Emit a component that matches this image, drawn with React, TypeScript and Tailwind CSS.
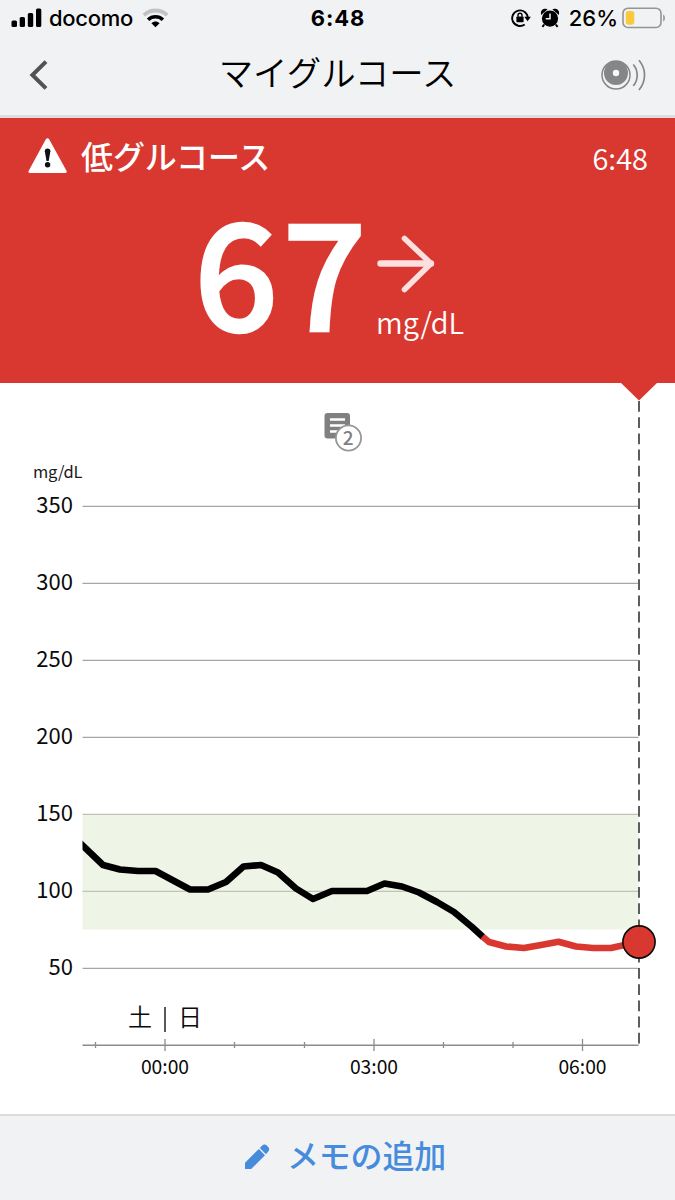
interface Reading {
  x: number;
  y: number;
}

const GRID = [
  { label: "350", y: 506 },
  { label: "300", y: 583 },
  { label: "250", y: 660 },
  { label: "200", y: 737 },
  { label: "150", y: 814 },
  { label: "100", y: 891 },
  { label: "50", y: 968 },
];

const HOURS = [
  { x: 95.5 },
  { x: 165, label: "00:00" },
  { x: 234.5 },
  { x: 304.5 },
  { x: 374, label: "03:00" },
  { x: 443.5 },
  { x: 513 },
  { x: 582.5, label: "06:00" },
];

const inRange: Reading[] = [
  { x: 80, y: 843 },
  { x: 103, y: 865 },
  { x: 120, y: 869.5 },
  { x: 138, y: 871 },
  { x: 155.5, y: 871 },
  { x: 190, y: 889.5 },
  { x: 208, y: 889.5 },
  { x: 226, y: 882 },
  { x: 243.5, y: 866.5 },
  { x: 261, y: 865 },
  { x: 278, y: 872.5 },
  { x: 296, y: 888.5 },
  { x: 313, y: 899 },
  { x: 332, y: 891 },
  { x: 367, y: 891 },
  { x: 384.5, y: 883.5 },
  { x: 402, y: 886.5 },
  { x: 419, y: 892.5 },
  { x: 437, y: 902 },
  { x: 454, y: 912 },
  { x: 472, y: 927 },
  { x: 483, y: 937 },
];

const low: Reading[] = [
  { x: 482.5, y: 936.5 },
  { x: 489, y: 942 },
  { x: 506, y: 946.5 },
  { x: 524, y: 948 },
  { x: 541, y: 945 },
  { x: 558.5, y: 941.8 },
  { x: 576, y: 946.5 },
  { x: 593, y: 948 },
  { x: 611, y: 948 },
  { x: 638, y: 942 },
];

const toPoints = (readings: Reading[]) => readings.map((r) => `${r.x},${r.y}`).join(" ");

function StatusBar() {
  return (
    <div className="grid h-[37px] grid-cols-3 items-center font-['Inter',sans-serif] text-[22px] text-black">
      <div className="flex items-center pl-[11px]">
        <svg className="mb-[2px] h-[20px] w-[31px]" viewBox="0 0 31 20">
          <rect x="0.5" y="12.5" width="5.5" height="6.5" rx="1.5" />
          <rect x="8.7" y="9" width="5.3" height="10" rx="1.5" />
          <rect x="16.8" y="5" width="5.4" height="14" rx="1.5" />
          <rect x="25" y="0.5" width="5.3" height="18.5" rx="1.5" />
        </svg>
        <span className="ml-[7px] font-medium tracking-[-0.3px]">docomo</span>
        <svg className="mb-px ml-[9px] h-[20px] w-[27px]" viewBox="0 0 27 20" fill="none">
          <path d="M1.8 7.2C8.5 0.9 18.5 0.9 25.2 7.2" stroke="#c1c3c5" strokeWidth="3.8" />
          <path d="M6.1 11.7C10.3 7.8 16.7 7.8 20.9 11.7" stroke="#000" strokeWidth="3.6" />
          <path d="M9.4 15.2C11.8 13 15.2 13 17.6 15.2L13.5 19.3Z" fill="#000" />
        </svg>
      </div>
      <span className="pl-px text-center font-bold tracking-[0.9px]">6:48</span>
      <div className="flex items-center justify-end pr-[9px]">
        <svg className="mb-px h-[20px] w-[20px]" viewBox="0 0 20 20" fill="none">
          <path d="M13.7 16.4A7.8 7.8 0 1 1 16.8 10" stroke="#000" strokeWidth="1.9" />
          <path d="M13.3 8.8h6.6l-3.3 4.4z" fill="#000" />
          <rect x="5.4" y="8.4" width="7.2" height="5.8" rx="0.8" fill="#000" />
          <path d="M7 8.8V7.2a2 2 0 0 1 4 0v1.6" stroke="#000" strokeWidth="1.4" />
        </svg>
        <svg className="mb-[2px] ml-[9px] h-[20px] w-[20px]" viewBox="0 0 20 20" fill="none">
          <circle cx="10" cy="10.6" r="8.1" fill="#000" />
          <path d="M1.9 5a3 3 0 0 1 3.6-3.2zM18.1 5a3 3 0 0 0-3.6-3.2z" fill="#000" stroke="#000" strokeWidth="2" />
          <path d="M4.2 16.5 2.4 18.8M15.8 16.5l1.8 2.3" stroke="#000" strokeWidth="2" />
          <path d="M10 5.6v5.2H5.8" stroke="#f1f2f4" strokeWidth="1.5" />
        </svg>
        <span className="ml-[9px] font-medium">26%</span>
        <svg className="mb-[2px] ml-[4px] h-[22px] w-[44px]" viewBox="0 0 44 22" fill="none">
          <rect x="1" y="1.2" width="38" height="19.3" rx="5" stroke="#939496" strokeWidth="1.6" />
          <rect x="3.8" y="4" width="8.5" height="13.7" rx="2.4" fill="#f9ca3e" />
          <path d="M41.2 7.4c2.3 1 2.3 6 0 7z" fill="#939496" />
        </svg>
      </div>
    </div>
  );
}

function NavBar() {
  return (
    <header className="grid h-[81px] grid-cols-[1fr_auto_1fr] items-center border-b-[3px] border-[#dddcde] pb-[3px]">
      <svg className="ml-[29px] h-[32px] w-[20px]" viewBox="0 0 20 32" fill="none">
        <path d="M17 2.6 3.4 16 17 29.4" stroke="#505254" strokeWidth="4" />
      </svg>
      <h1 className="mb-[6px] text-[34.4px] leading-none font-[350] text-black">マイグルコース</h1>
      <svg className="mr-[26px] h-[34px] w-[50px] justify-self-end" viewBox="0 0 50 34" fill="none">
        <circle cx="17" cy="17" r="14" stroke="#858688" strokeWidth="1.5" />
        <circle cx="17" cy="15" r="12" fill="#858688" />
        <circle cx="17" cy="15" r="3.2" fill="#f8f8f9" />
        <path d="M34.3 6.5c5.2 6.2 5.2 15.2 0 21.4M40 2.2c7.4 8.8 7.4 20.8 0 29.8" stroke="#858688" strokeWidth="1.7" />
      </svg>
    </header>
  );
}

function LowAlert() {
  return (
    <section className="relative h-[265px] bg-[#d93831] text-white">
      <div className="flex h-[78px] items-center pr-[27px] pl-[28px]">
        <svg className="mb-[2px] h-[36px] w-[40px]" viewBox="0 0 40 36">
          <path d="M17.7 1.5Q19.5-.8 21.3 1.5L38.6 33Q39.2 35 37 35H2Q-.1 35 .6 33Z" fill="#fff" />
          <path d="M16.8 13.2a2.8 2.8 0 0 1 5.6 0L20.7 23h-2.2z" fill="#111" />
          <circle cx="19.6" cy="26.8" r="2.7" fill="#111" />
        </svg>
        <h2 className="mb-[5px] ml-[13px] text-[32px] leading-none font-medium tracking-[-0.1px]">低グルコース</h2>
        <span className="ml-auto text-[29px] leading-none font-[350]">6:48</span>
      </div>
      <div className="flex h-[160px] items-start pl-[194px]">
        <span className="-mt-[4px] w-[176px] text-[148px] leading-[150px] font-medium tracking-[4px] [-webkit-text-stroke:2.4px_white]">
          67
        </span>
        <div className="ml-[6px] flex flex-col pt-[38px]">
          <svg className="h-[60px] w-[60px]" viewBox="0 0 60 60" fill="none" strokeLinecap="round">
            <path d="M28.5 4.5 55 29.5 28.5 55.5" stroke="#fbe0df" strokeWidth="5.6" strokeLinejoin="round" />
            <path d="M4.5 29.5H55" stroke="#fbe0df" strokeWidth="6.4" />
          </svg>
          <span className="mt-[13px] text-[29px] leading-none font-[350]">mg/dL</span>
        </div>
      </div>
      <svg className="absolute top-[264px] left-[620px] h-[20px] w-[38px]" viewBox="0 0 38 20">
        <path d="M0 0H38L19 18.5Z" fill="#d93831" />
      </svg>
    </section>
  );
}

function GlucoseChart() {
  return (
    <svg className="block h-[731px] w-[675px]" viewBox="0 383 675 731" fill="none">
      {/* Notes marker with count */}
      <rect x="324.5" y="413" width="25.5" height="25.5" rx="3" fill="#808080" />
      <path d="M330 419.5h15M330 425.5h15M330 431.5h10" stroke="#fff" strokeWidth="2.6" />
      <circle cx="348.5" cy="438" r="12.6" fill="#fff" stroke="#979797" strokeWidth="1.8" />
      <text x="348.2" y="444.8" textAnchor="middle" fill="#808080" className="text-[19px] font-medium">2</text>

      <text x="33" y="478" fill="#1a1a1a" textLength="49.5" className="text-[16.5px]">mg/dL</text>

      {/* Target range */}
      <rect x="82.5" y="814" width="556" height="115.5" fill="#eff5e6" />
      {GRID.map((line) => (
        <g key={line.label}>
          <path
            d={`M82.5 ${line.y + 0.3}H638.5`}
            stroke={line.y === 814 || line.y === 891 ? "#bfc4b8" : "#a6a6a6"}
            strokeWidth="1.3"
          />
          <text x="73" y={line.y + 6.6} textAnchor="end" fill="#0a0a0a" className="text-[22px]">
            {line.label}
          </text>
        </g>
      ))}

      {/* Time axis */}
      <path d="M82.5 1045.2H638.5" stroke="#8c8c8c" strokeWidth="1.4" />
      {HOURS.map((tick) => (
        <g key={tick.x}>
          <path
            d={tick.label ? `M${tick.x} 1039V1051` : `M${tick.x} 1042V1048`}
            stroke="#8c8c8c"
            strokeWidth="1.3"
          />
          {tick.label && (
            <text x={tick.x} y="1074" textAnchor="middle" fill="#0a0a0a" className="text-[19.3px]">
              {tick.label}
            </text>
          )}
        </g>
      ))}
      <text x="140" y="1026" textAnchor="middle" fill="#0a0a0a" className="text-[24px] font-[350]">土</text>
      <path d="M165 1007V1032" stroke="#222" strokeWidth="1.5" />
      <text x="190" y="1026" textAnchor="middle" fill="#0a0a0a" className="text-[24px] font-[350]">日</text>

      {/* Current time */}
      <path d="M639 401V1044" stroke="#555" strokeWidth="1.9" strokeDasharray="10.8 5.4" />

      <clipPath id="plot">
        <rect x="82.5" y="480" width="560" height="560" />
      </clipPath>
      <g clipPath="url(#plot)" strokeWidth="6.6" strokeLinejoin="round">
        <polyline points={toPoints(inRange)} stroke="#000" />
        <polyline points={toPoints(low)} stroke="#d93831" />
      </g>
      <circle cx="639" cy="942" r="16.1" fill="#d93831" stroke="#0a0a0a" strokeWidth="1.6" />
    </svg>
  );
}

export default function App() {
  return (
    <div className="flex h-[1200px] w-[675px] flex-col overflow-hidden bg-white font-['Noto_Sans_CJK_JP',sans-serif]">
      <div className="bg-[#f1f2f4]">
        <StatusBar />
        <NavBar />
      </div>
      <LowAlert />
      <GlucoseChart />
      <button className="flex h-[86px] items-center border-t-2 border-[#dcdcde] bg-[#f1f2f4] pl-[244px] text-[#468bdc]">
        <svg className="mb-[3px] h-[26px] w-[26px]" viewBox="0 0 26 26" fill="currentColor">
          <path d="M1 25V18.8L14.8 5 21 11.2 7.2 25Z" />
          <path d="M15.8 4 18 1.8a3.6 3.6 0 0 1 5 0l1 1a3.6 3.6 0 0 1 0 5L22 10.2Z" />
        </svg>
        <span className="mb-[8px] ml-[17px] text-[32px] leading-none font-medium tracking-[-0.2px]">メモの追加</span>
      </button>
    </div>
  );
}
